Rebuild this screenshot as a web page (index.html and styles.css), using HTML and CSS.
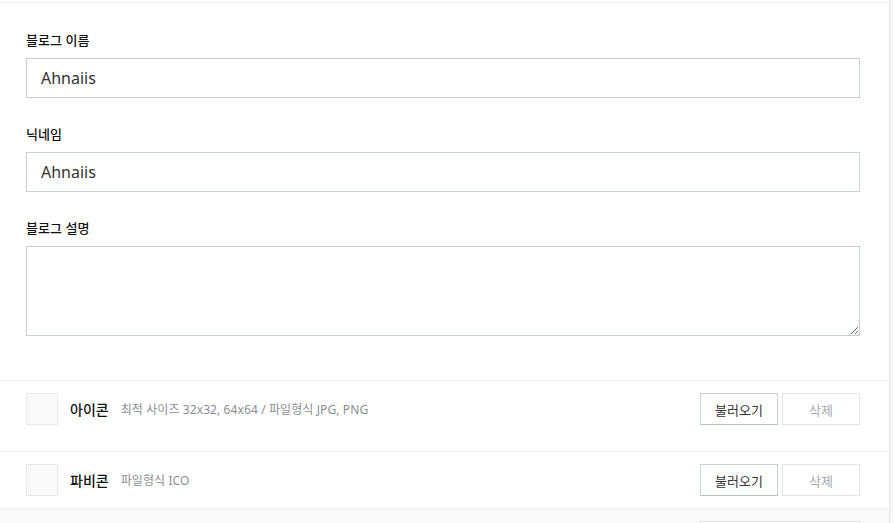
FILE: index.html
```html
<!DOCTYPE html>
<html lang="ko">
<head>
<meta charset="UTF-8">
<meta name="viewport" content="width=device-width, initial-scale=1.0">
<title>블로그 설정</title>
<link rel="stylesheet" href="styles.css">
</head>
<body>
    <div class="panel">
        <form class="info-form">
            <div class="field">
                <label for="blogName">블로그 이름</label>
                <input type="text" id="blogName" value="Ahnaiis">
            </div>
            <div class="field">
                <label for="nickname">닉네임</label>
                <input type="text" id="nickname" value="Ahnaiis">
            </div>
            <div class="field">
                <label for="blogDesc">블로그 설명</label>
                <textarea id="blogDesc"></textarea>
            </div>
        </form>

        <div class="file-row file-row-icon">
            <div class="thumb"></div>
            <span class="file-title">아이콘</span>
            <span class="file-desc">최적 사이즈 32x32, 64x64 / 파일형식 JPG, PNG</span>
            <div class="file-buttons">
                <button type="button" class="btn">불러오기</button>
                <button type="button" class="btn btn-disabled">삭제</button>
            </div>
        </div>

        <div class="file-row">
            <div class="thumb"></div>
            <span class="file-title">파비콘</span>
            <span class="file-desc">파일형식 ICO</span>
            <div class="file-buttons">
                <button type="button" class="btn">불러오기</button>
                <button type="button" class="btn btn-disabled">삭제</button>
            </div>
        </div>

        <div class="file-row file-row-gray">
            <div class="file-buttons">
                <button type="button" class="btn btn-wide"></button>
            </div>
        </div>
    </div>
</body>
</html>
```

FILE: styles.css
```css
body {
    font-family: "Noto Sans", "Noto Sans CJK KR", sans-serif;
    background-color: #f4f5f7;
    margin: 0;
    padding: 0;
    overflow: hidden;
}

.panel {
    width: 890px;
    height: 523px;
    overflow: hidden;
    background-color: #fff;
    border-right: 1px solid #e4e6ea;
    padding-top: 2px;
    box-sizing: border-box;
}

.info-form {
    border-top: 1px solid #eff0f3;
    padding: 27px 29px 44px 26px;
}

.field + .field {
    margin-top: 26px;
}

.field label {
    display: block;
    font-family: "Noto Sans CJK KR", sans-serif;
    font-size: 13px;
    font-weight: 500;
    line-height: 20px;
    color: #111;
    margin-bottom: 8px;
}

.field input[type="text"],
.field textarea {
    display: block;
    width: 100%;
    box-sizing: border-box;
    border: 1px solid #c6ced8;
    border-radius: 0;
    background-color: #fff;
    font-family: "Noto Sans", "Noto Sans CJK KR", sans-serif;
    color: #333;
    margin: 0;
}

.field input[type="text"] {
    height: 40px;
    padding: 0 14px;
    font-size: 16px;
}

.field textarea {
    height: 90px;
    padding: 8px 14px;
    font-size: 14px;
    resize: vertical;
}

.file-row {
    display: flex;
    align-items: center;
    padding: 12px 29px 12px 26px;
    border-top: 1px solid #eff0f3;
}

.file-row-icon {
    padding-bottom: 26px;
}

.file-row-gray {
    background-color: #f8f9fb;
    padding-bottom: 0;
}

.thumb {
    width: 32px;
    height: 32px;
    box-sizing: border-box;
    background-color: #f8f9fb;
    border: 1px solid #e8eaee;
    margin-right: 12px;
}

.file-title {
    font-family: "Noto Sans CJK KR", sans-serif;
    font-size: 14px;
    font-weight: 500;
    color: #111;
    margin-right: 12px;
}

.file-desc {
    font-family: "Noto Sans", "Noto Sans CJK KR", sans-serif;
    font-size: 12px;
    letter-spacing: 0.1px;
    color: #8a8d92;
}

.file-buttons {
    display: flex;
    gap: 4px;
    margin-left: auto;
}

.btn {
    width: 78px;
    height: 32px;
    padding: 0;
    background-color: #fff;
    border: 1px solid #c6ced8;
    border-bottom-color: #b8c0ca;
    font-family: "Noto Sans CJK KR", sans-serif;
    font-size: 13px;
    color: #333;
    cursor: pointer;
}

.btn-disabled {
    border-color: #e1e4e9;
    color: #a5a8ad;
    cursor: default;
}

.btn-wide {
    width: 160px;
    border-color: #e1e4e9;
}
```
